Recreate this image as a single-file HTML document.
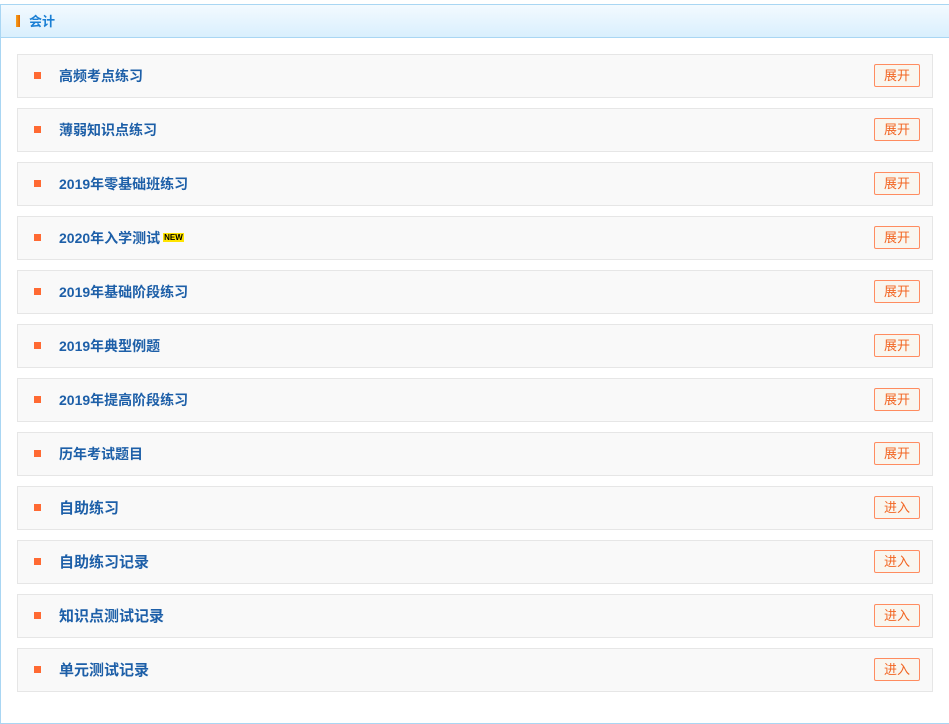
<!DOCTYPE html>
<html><head><meta charset="utf-8"><style>
html,body{margin:0;background:#fff;width:949px;height:692px;overflow:hidden;font-family:"Liberation Sans","Noto Sans CJK SC",sans-serif;}
.box{position:absolute;left:0;top:4px;width:960px;height:720px;border:1px solid #a9d6f3;box-sizing:border-box;}
.hd{position:absolute;left:1px;top:5px;width:960px;height:32px;background:linear-gradient(#f3faff,#d9effd);border-bottom:1px solid #a9d6f3;}
.bar{position:absolute;left:15px;top:10px;width:4px;height:12px;background:linear-gradient(90deg,#f7a01c,#e26b00);}
.ht{position:absolute;left:28px;top:6px;font-size:13px;font-weight:bold;color:#1a7fd4;}
.row{position:absolute;left:17px;width:916px;height:44px;background:#f9f9f9;border:1px solid #e6e6e6;box-sizing:border-box;}
.dot{position:absolute;left:16px;top:17px;width:7px;height:7px;background:#ff6a33;}
.t{position:absolute;left:41px;top:11px;font-size:14px;font-weight:bold;color:#1d5fa8;}
.t.n{font-size:15px;top:10px;}
.new{font-size:8px;font-weight:bold;background:#ffe400;color:#000;padding:0 1px;vertical-align:3px;margin-left:3px;}
.btn{position:absolute;left:856px;top:9px;width:46px;height:23px;border:1px solid #ff8c60;border-radius:2px;background:#f9f6ef;box-sizing:border-box;color:#f26522;font-size:13px;text-align:center;line-height:21px;}
</style></head><body>
<div class="box"></div>
<div class="hd"><div class="bar"></div><div class="ht">会计</div></div>
<div class="row" style="top:54px"><div class="dot"></div><div class="t">高频考点练习</div><div class="btn">展开</div></div>
<div class="row" style="top:108px"><div class="dot"></div><div class="t">薄弱知识点练习</div><div class="btn">展开</div></div>
<div class="row" style="top:162px"><div class="dot"></div><div class="t">2019年零基础班练习</div><div class="btn">展开</div></div>
<div class="row" style="top:216px"><div class="dot"></div><div class="t">2020年入学测试<span class="new">NEW</span></div><div class="btn">展开</div></div>
<div class="row" style="top:270px"><div class="dot"></div><div class="t">2019年基础阶段练习</div><div class="btn">展开</div></div>
<div class="row" style="top:324px"><div class="dot"></div><div class="t">2019年典型例题</div><div class="btn">展开</div></div>
<div class="row" style="top:378px"><div class="dot"></div><div class="t">2019年提高阶段练习</div><div class="btn">展开</div></div>
<div class="row" style="top:432px"><div class="dot"></div><div class="t">历年考试题目</div><div class="btn">展开</div></div>
<div class="row" style="top:486px"><div class="dot"></div><div class="t n">自助练习</div><div class="btn">进入</div></div>
<div class="row" style="top:540px"><div class="dot"></div><div class="t n">自助练习记录</div><div class="btn">进入</div></div>
<div class="row" style="top:594px"><div class="dot"></div><div class="t n">知识点测试记录</div><div class="btn">进入</div></div>
<div class="row" style="top:648px"><div class="dot"></div><div class="t n">单元测试记录</div><div class="btn">进入</div></div>
</body></html>
